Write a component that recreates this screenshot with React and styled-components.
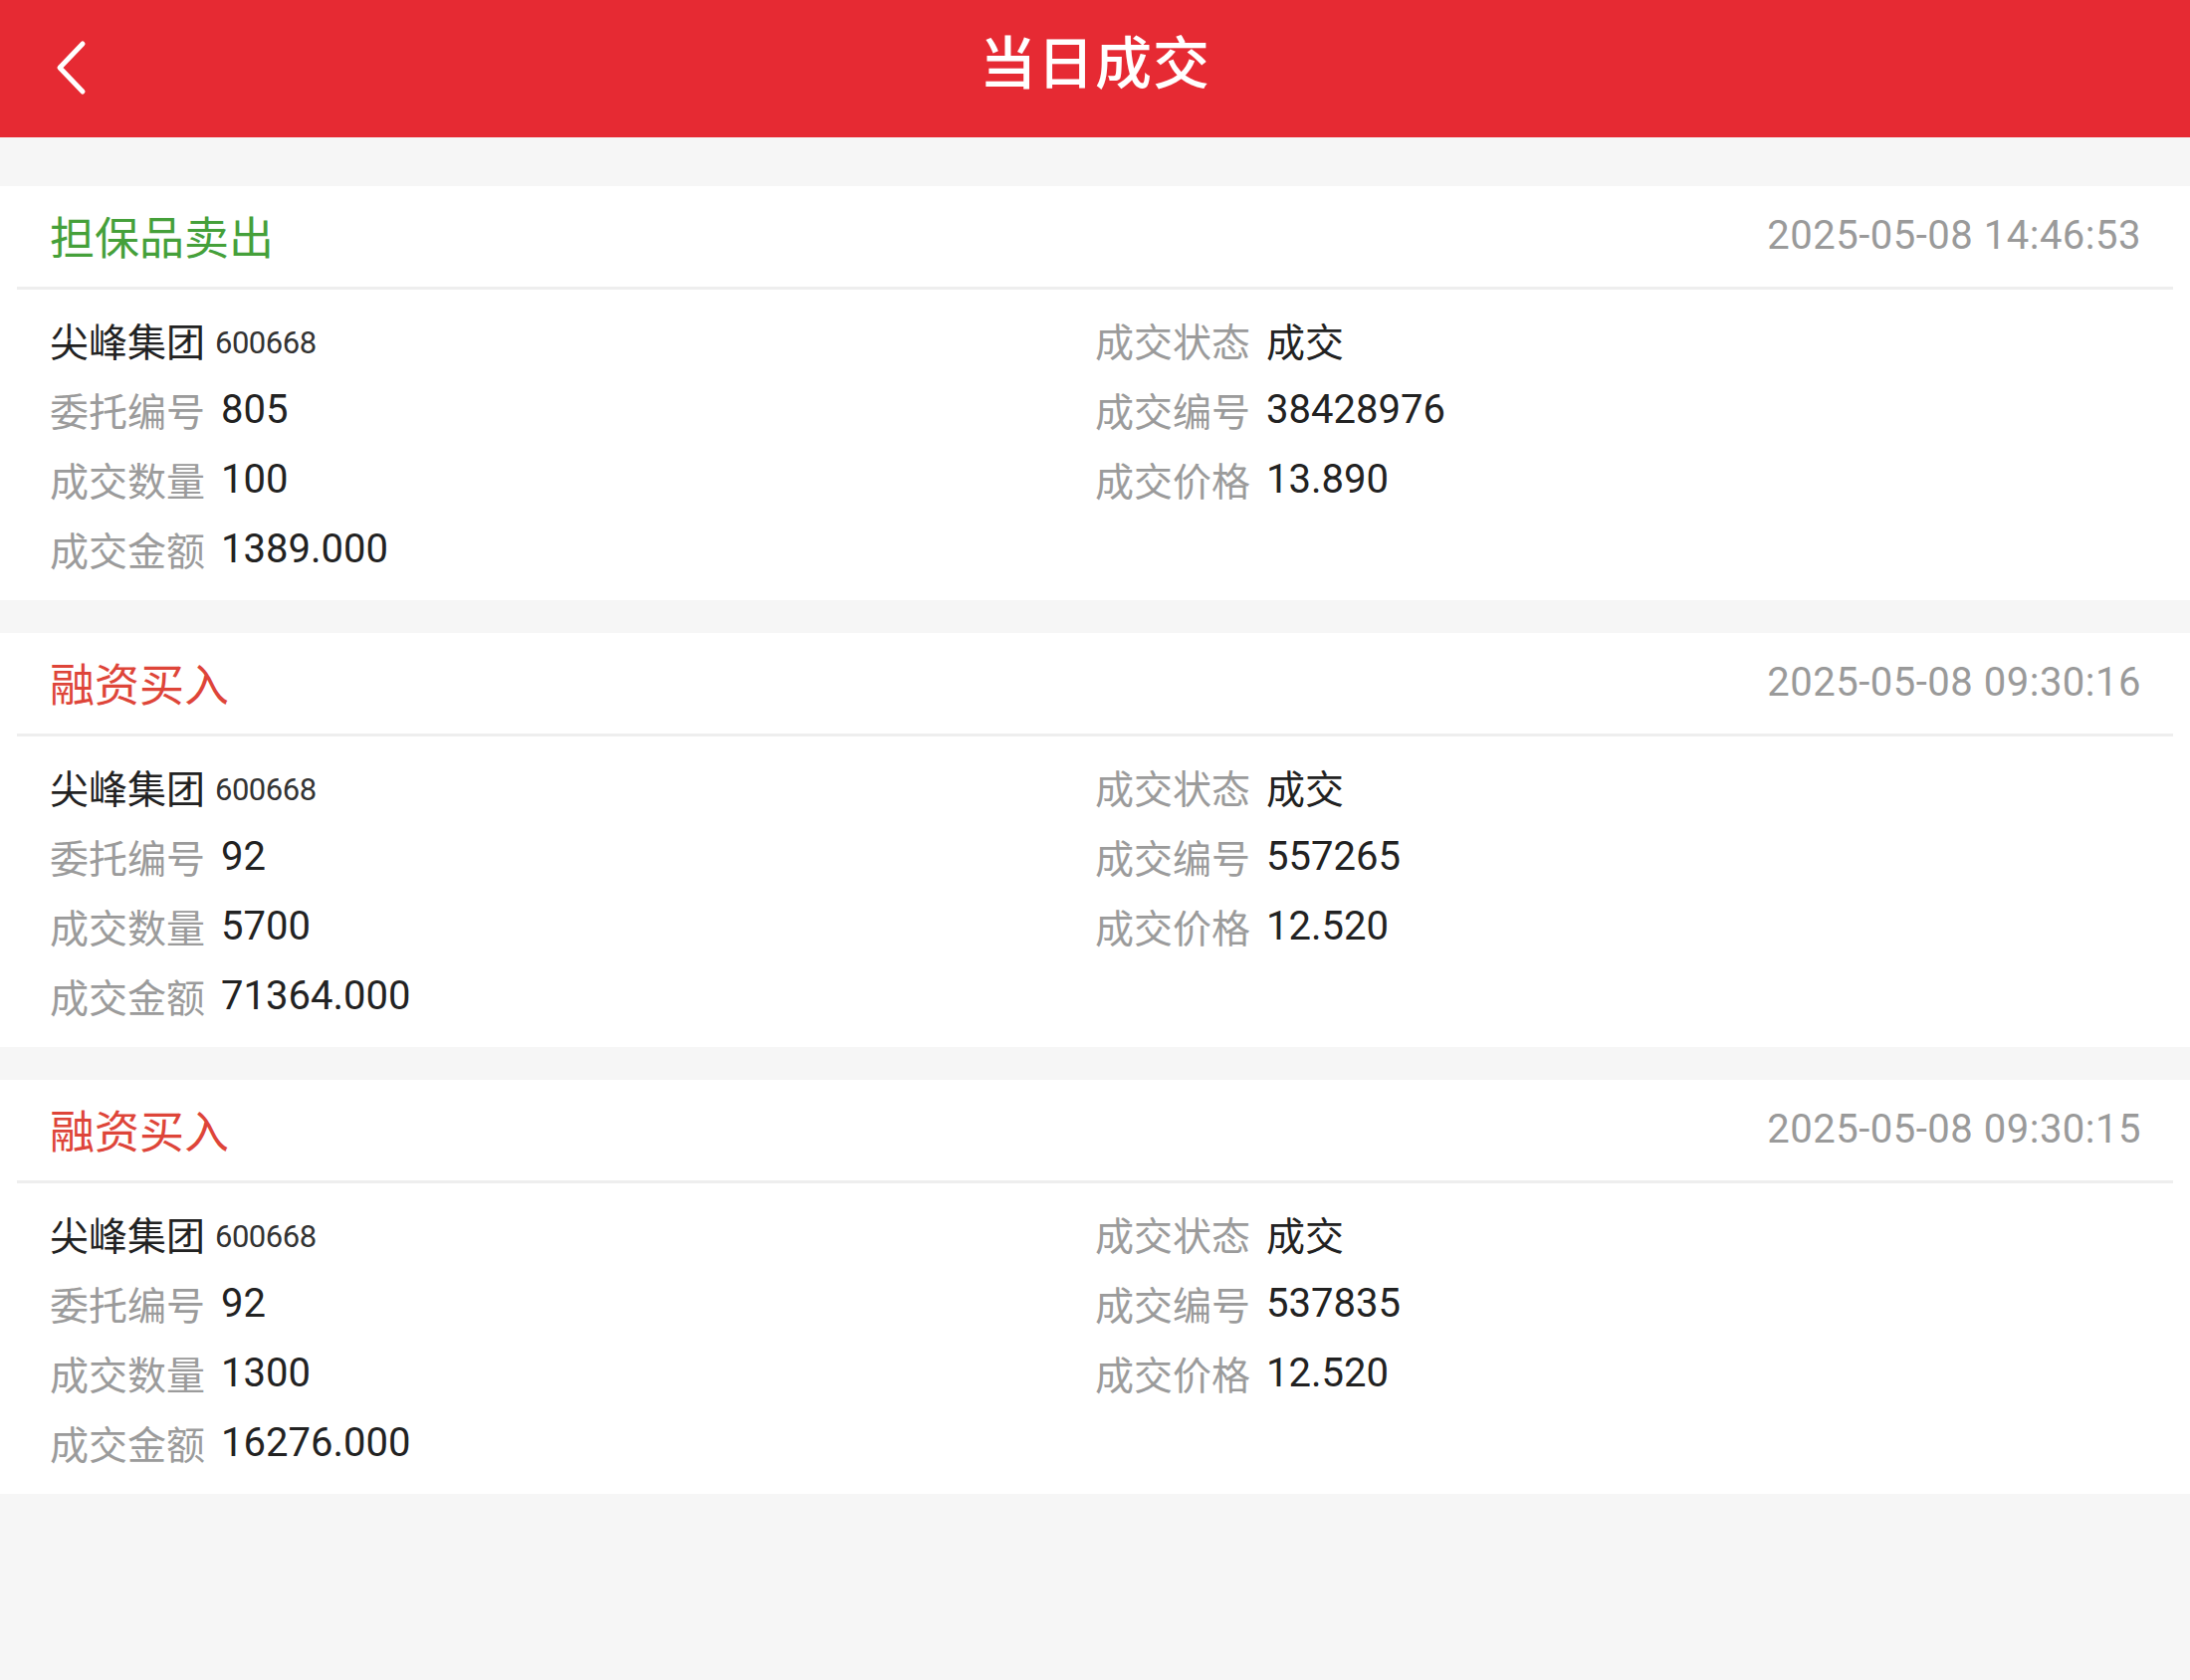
import React from 'react';
import styled, { createGlobalStyle } from 'styled-components';

const GlobalStyle = createGlobalStyle`
  html, body {
    margin: 0;
    padding: 0;
    background: #f6f6f6;
  }
  body {
    font-family: Roboto, "Noto Sans CJK SC", sans-serif;
    -webkit-font-smoothing: antialiased;
  }
`;

const Page = styled.div`
  width: 2200px;
  min-height: 1688px;
  background: #f6f6f6;
`;

const NavBar = styled.div`
  height: 138px;
  box-sizing: border-box;
  padding-bottom: 20px;
  background: #e62a33;
  display: flex;
  align-items: center;
  justify-content: center;
  position: relative;
`;

const BackButton = styled.button`
  position: absolute;
  left: 40px;
  top: 28px;
  width: 64px;
  height: 80px;
  border: 0;
  padding: 0;
  background: transparent;
  display: flex;
  align-items: center;
  justify-content: center;
  cursor: pointer;
`;

const NavTitle = styled.h1`
  margin: 0;
  color: #fff;
  font-family: "Noto Sans CJK SC", sans-serif;
  font-size: 57px;
  font-weight: 500;
  letter-spacing: 1px;
`;

const List = styled.div`
  padding-top: 49px;
  display: flex;
  flex-direction: column;
  gap: 33px;
`;

const Card = styled.div`
  background: #fff;
`;

const CardHeader = styled.div`
  height: 101px;
  box-sizing: border-box;
  padding: 0 49px 2px 50px;
  display: flex;
  align-items: center;
  justify-content: space-between;
`;

const TradeType = styled.span`
  font-family: "Noto Sans CJK SC", sans-serif;
  font-size: 45px;
  color: ${({ sell }) => (sell ? '#45a03a' : '#de4539')};
`;

const Time = styled.span`
  font-size: 40px;
  color: #9a9a9a;
  letter-spacing: 0.5px;
`;

const Divider = styled.div`
  height: 3px;
  margin: 0 17px;
  background: #eeeeee;
`;

const Body = styled.div`
  padding: 15px 50px 17px;
  display: grid;
  grid-template-columns: 1fr 1fr;
  grid-auto-rows: 70px;
`;

const Field = styled.div`
  display: flex;
  align-items: center;
  gap: 16px;
  font-size: 40px;
`;

const Label = styled.span`
  font-family: "Noto Sans CJK SC", sans-serif;
  font-size: 39px;
  color: #9b9b9b;
`;

const Value = styled.span`
  color: #222;
`;

const StockName = styled.span`
  font-family: "Noto Sans CJK SC", sans-serif;
  font-size: 39px;
  color: #222;
`;

const StockCode = styled.span`
  font-size: 31px;
  color: #333;
  margin-top: 6px;
  margin-left: -6px;
  letter-spacing: -0.5px;
`;

const ChevronLeft = () => (
  <svg width="36" height="58" viewBox="0 0 36 58" fill="none">
    <path d="M29 5 L6 29 L29 53" stroke="#fff" strokeWidth="5" strokeLinecap="round" strokeLinejoin="round" />
  </svg>
);

const trades = [
  {
    type: '担保品卖出',
    sell: true,
    time: '2025-05-08 14:46:53',
    entrust: '805',
    dealNo: '38428976',
    qty: '100',
    price: '13.890',
    amount: '1389.000',
  },
  {
    type: '融资买入',
    time: '2025-05-08 09:30:16',
    entrust: '92',
    dealNo: '557265',
    qty: '5700',
    price: '12.520',
    amount: '71364.000',
  },
  {
    type: '融资买入',
    time: '2025-05-08 09:30:15',
    entrust: '92',
    dealNo: '537835',
    qty: '1300',
    price: '12.520',
    amount: '16276.000',
  },
];

const Row = ({ label, value }) => (
  <Field>
    <Label>{label}</Label>
    <Value>{value}</Value>
  </Field>
);

const TradeCard = ({ trade }) => (
  <Card>
    <CardHeader>
      <TradeType sell={trade.sell}>{trade.type}</TradeType>
      <Time>{trade.time}</Time>
    </CardHeader>
    <Divider />
    <Body>
      <Field>
        <StockName>尖峰集团</StockName>
        <StockCode>600668</StockCode>
      </Field>
      <Row label="成交状态" value={<StockName>成交</StockName>} />
      <Row label="委托编号" value={trade.entrust} />
      <Row label="成交编号" value={trade.dealNo} />
      <Row label="成交数量" value={trade.qty} />
      <Row label="成交价格" value={trade.price} />
      <Row label="成交金额" value={trade.amount} />
    </Body>
  </Card>
);

const App = () => (
  <Page>
    <GlobalStyle />
    <NavBar>
      <BackButton aria-label="返回">
        <ChevronLeft />
      </BackButton>
      <NavTitle>当日成交</NavTitle>
    </NavBar>
    <List>
      {trades.map((t, i) => (
        <TradeCard key={i} trade={t} />
      ))}
    </List>
  </Page>
);

export default App;
